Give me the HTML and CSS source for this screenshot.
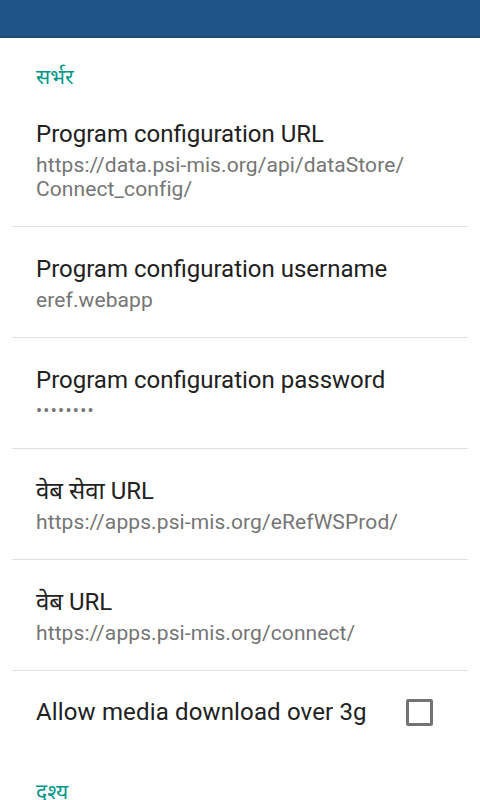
FILE: index.html
```html
<!DOCTYPE html>
<html lang="hi">
<head>
<meta charset="utf-8">
<title>Settings</title>
<link rel="stylesheet" href="styles.css">
</head>
<body>
<header class="appbar"></header>
<main class="prefs">
  <div class="category">सर्भर</div>
  <div class="pref">
    <div class="pref-title">Program configuration URL</div>
    <div class="pref-summary">https://data.psi-mis.org/api/dataStore/<br>Connect_config/</div>
  </div>
  <div class="pref">
    <div class="pref-title">Program configuration username</div>
    <div class="pref-summary">eref.webapp</div>
  </div>
  <div class="pref">
    <div class="pref-title">Program configuration password</div>
    <div class="pref-summary dots">••••••••</div>
  </div>
  <div class="pref">
    <div class="pref-title">वेब सेवा URL</div>
    <div class="pref-summary">https://apps.psi-mis.org/eRefWSProd/</div>
  </div>
  <div class="pref">
    <div class="pref-title">वेब URL</div>
    <div class="pref-summary">https://apps.psi-mis.org/connect/</div>
  </div>
  <div class="pref pref-check">
    <div class="pref-title">Allow media download over 3g</div>
    <span class="checkbox"></span>
  </div>
  <div class="category">दृश्य</div>
</main>
</body>
</html>
```
FILE: styles.css
```css
html, body {
  margin: 0;
  padding: 0;
  background: #ffffff;
}
body {
  width: 480px;
  height: 800px;
  overflow: hidden;
  font-family: Roboto, "Noto Sans", "Noto Sans Devanagari", sans-serif;
}
.appbar {
  height: 36px;
  background: #1f5486;
  border-bottom: 2px solid #1a4a78;
}
.prefs {
  padding: 0 12px;
}
.category {
  padding: 27px 24px 3px;
  font-size: 21px;
  line-height: 24px;
  color: #009688;
}
.pref {
  padding: 28px 24px 25px;
  border-bottom: 1px solid #e0e0e0;
}
.pref-title {
  font-size: 24px;
  line-height: 28px;
  color: #212121;
}
.pref-summary {
  margin-top: 5px;
  font-size: 21px;
  line-height: 24px;
  letter-spacing: 0.1px;
  color: #757575;
}
.dots {
  font-size: 18px;
  letter-spacing: 1.3px;
}
.pref-check {
  display: flex;
  align-items: center;
  justify-content: space-between;
  height: 82px;
  padding: 0 35px 0 24px;
  border-bottom: none;
  box-sizing: border-box;
}
.pref-check .pref-title {
  letter-spacing: 0.15px;
}
.checkbox {
  width: 21px;
  height: 21px;
  border: 3px solid #737373;
  border-radius: 2px;
}
```
